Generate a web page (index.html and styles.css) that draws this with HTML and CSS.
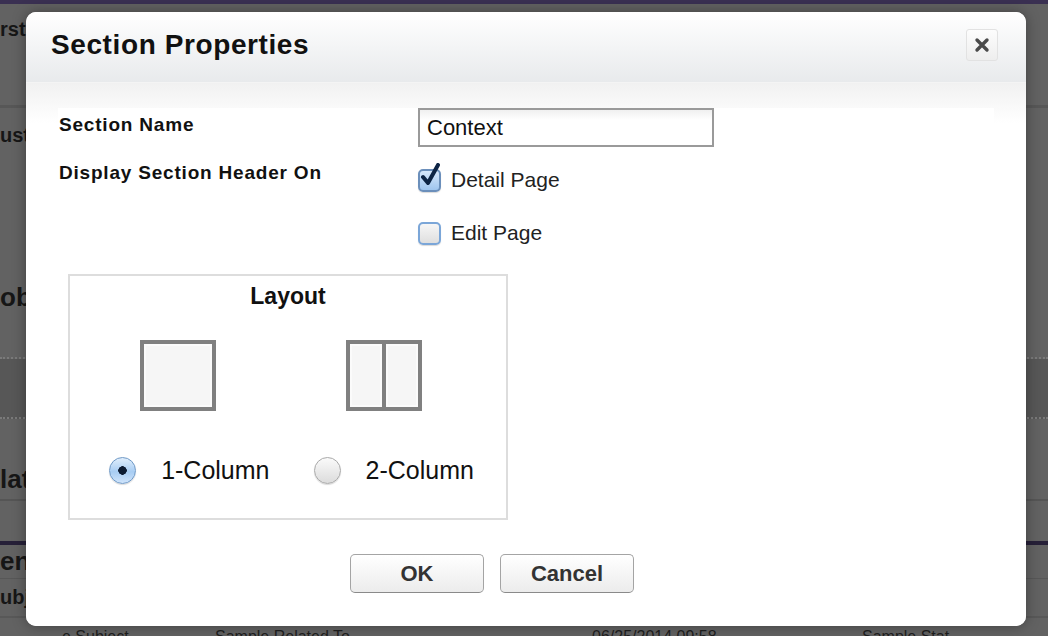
FILE: index.html
```html
<!DOCTYPE html>
<html>
<head>
<meta charset="utf-8">
<link rel="stylesheet" href="styles.css">
</head>
<body>
<div class="page">
  <div class="topbar"></div>
  <div class="bg-row r1"><span>rst</span></div>
  <div class="bg-row r2"><span>ust</span></div>
  <div class="bg-row r3"><span>obi</span></div>
  <div class="bg-row r4"></div>
  <div class="bg-row r5"><span>lat</span></div>
  <div class="bg-row r6"><span>en</span></div>
  <div class="bg-row r7"><span>ubj</span></div>
  <div class="bg-row r8">
    <span class="c1">e Subject</span>
    <span class="c2">Sample Related To</span>
    <span class="c3">06/25/2014 09:58</span>
    <span class="c4">Sample Stat</span>
  </div>
</div>

<div class="modal">
  <div class="modal-header">
    <h1 class="modal-title">Section Properties</h1>
    <button class="close-btn" aria-label="Close">
      <svg width="16" height="16" viewBox="0 0 16 16"><path d="M3 3 L13 13 M13 3 L3 13" stroke="#4a4a4a" stroke-width="3.4" stroke-linecap="round"/></svg>
    </button>
  </div>
  <div class="modal-body">
    <div class="form">
      <div class="form-row">
        <div class="label">Section Name</div>
        <div class="field"><div class="text-input">Context</div></div>
      </div>
      <div class="form-row second">
        <div class="label">Display Section Header On</div>
        <div class="field options">
          <label class="check-opt">
            <span class="checkbox checked">
              <svg class="tick" width="22" height="26" viewBox="0 0 22 26"><path d="M4 14 L9 20 L19 2" fill="none" stroke="#0d2445" stroke-width="4" stroke-linecap="round" stroke-linejoin="round"/></svg>
            </span>
            <span class="opt-text">Detail Page</span>
          </label>
          <label class="check-opt">
            <span class="checkbox"></span>
            <span class="opt-text">Edit Page</span>
          </label>
        </div>
      </div>
    </div>

    <div class="layout-box">
      <div class="layout-title">Layout</div>
      <div class="layout-icons">
        <div class="col-icon one"><div class="pane"></div></div>
        <div class="col-icon two"><div class="pane"></div><div class="pane"></div></div>
      </div>
      <div class="layout-radios">
        <label class="radio-opt"><span class="radio on"></span><span class="radio-text">1-Column</span></label>
        <label class="radio-opt"><span class="radio"></span><span class="radio-text">2-Column</span></label>
      </div>
    </div>

    <div class="buttons">
      <button class="btn">OK</button>
      <button class="btn">Cancel</button>
    </div>
  </div>
</div>
</body>
</html>
```

FILE: styles.css
```css
* { box-sizing: border-box; }
html, body { margin: 0; padding: 0; }
body {
  width: 1048px;
  height: 636px;
  overflow: hidden;
  background: #626262;
  font-family: "Liberation Sans", Arial, sans-serif;
  position: relative;
}
.page {
  display: flex;
  flex-direction: column;
  color: #161616;
  font-weight: bold;
}
.topbar { height: 4px; background: #3a3052; }
.bg-row {
  display: flex;
  align-items: center;
  white-space: nowrap;
  font-size: 26px;
}
.r1 { height: 104px; align-items: flex-start; padding-top: 14px; font-size: 20px; border-bottom: 3px solid #575757; }
.r2 { height: 60px; align-items: flex-start; padding-top: 16px; font-size: 20px; }
.r3 { height: 191px; padding-top: 70px; border-bottom: 2px dotted #7a7a7a; }
.r4 { height: 60px; background: #575757; border-bottom: 2px dotted #7a7a7a; }
.r5 { height: 82px; padding-top: 40px; border-bottom: 2px solid #555; }
.r6 { height: 38px; margin-top: 40px; border-top: 4px solid #262038; border-bottom: 1px solid #575757; }
.r7 { height: 39px; font-size: 20px; border-bottom: 2px solid #585858; }
.r8 { height: 22px; align-items: flex-start; padding-top: 10px; font-size: 16px; font-weight: normal; color: #1e1e1e; }
.r8 .c1 { width: 215px; padding-left: 62px; }
.r8 .c2 { width: 377px; }
.r8 .c3 { width: 270px; }

.modal {
  position: absolute;
  left: 26px;
  top: 12px;
  width: 1000px;
  height: 614px;
  border-radius: 10px;
  background: #fff;
  box-shadow: 0 0 14px rgba(0,0,0,0.35);
  overflow: hidden;
  display: flex;
  flex-direction: column;
}
.modal-header {
  height: 71px;
  flex: none;
  display: flex;
  align-items: center;
  justify-content: space-between;
  padding: 0 28px 0 25px;
  background: linear-gradient(#ffffff, #e8eaec);
  border-bottom: 1px solid #f4f4f4;
}
.modal-title {
  margin: 0;
  font-size: 28px;
  letter-spacing: 0.6px;
  font-weight: bold;
  color: #111;
  padding-bottom: 4px;
}
.close-btn {
  width: 32px;
  height: 32px;
  padding: 0;
  display: flex;
  align-items: center;
  justify-content: center;
  background: linear-gradient(#fdfdfd, #eeeeee);
  border: 1px solid #e2e2e2;
  border-radius: 3px;
  margin-top: -4px;
}
.modal-body {
  flex: 1;
  padding: 25px 32px 0 32px;
  background: linear-gradient(#f1f1f1 0px, #ffffff 40px);
  display: flex;
  flex-direction: column;
}
.form {
  background: #fff;
  display: flex;
  flex-direction: column;
}
.form-row {
  display: flex;
}
.label {
  width: 360px;
  flex: none;
  font-size: 19px;
  letter-spacing: 0.8px;
  line-height: 22px;
  font-weight: bold;
  color: #111;
  padding-left: 1px;
  padding-top: 6px;
}
.text-input {
  width: 296px;
  height: 39px;
  border: 2px solid #9a9a9a;
  background: linear-gradient(#f0f0f0 0px, #ffffff 10px);
  font-size: 22px;
  line-height: 25px;
  color: #111;
  padding: 5px 0 0 7px;
}
.form-row.second { margin-top: 12px; }
.form-row.second .label { padding-top: 3px; }
.options {
  display: flex;
  flex-direction: column;
  gap: 29px;
  padding-top: 9px;
}
.check-opt {
  display: flex;
  align-items: center;
  height: 24px;
}
.checkbox {
  position: relative;
  width: 23px;
  height: 23px;
  border-radius: 5px;
  border: 2px solid #7ba6d8;
  background: linear-gradient(#f6f6f6, #dfdfdf);
  box-shadow: 0 1px 1px rgba(0,0,0,0.15);
  flex: none;
}
.checkbox.checked {
  border-color: #6b8fbb;
  background: linear-gradient(#d6e7fb, #9fc5ef);
}
.tick {
  position: absolute;
  left: -1px;
  top: -8px;
}
.opt-text {
  margin-left: 10px;
  font-size: 21px;
  color: #222;
}

.layout-box {
  width: 440px;
  height: 246px;
  margin-top: 29px;
  margin-left: 10px;
  border: 2px solid #dddddd;
  display: flex;
  flex-direction: column;
  align-items: center;
}
.layout-title {
  font-size: 23px;
  line-height: 26px;
  font-weight: bold;
  color: #111;
  margin-top: 7px;
}
.layout-icons {
  display: flex;
  gap: 130px;
  margin-top: 31px;
  margin-left: -14px;
}
.col-icon {
  width: 76px;
  height: 71px;
  border: 4px solid #808080;
  background: #808080;
  display: flex;
  gap: 4px;
}
.pane {
  flex: 1;
  background: #f6f6f6;
  border: 2px solid #fbfbfb;
}
.layout-radios {
  display: flex;
  gap: 44px;
  margin-top: 45px;
  margin-left: 7px;
}
.radio-opt {
  display: flex;
  align-items: center;
}
.radio {
  width: 27px;
  height: 27px;
  border-radius: 50%;
  border: 1px solid #a9a9a9;
  background: linear-gradient(#fafafa, #dcdcdc);
  box-shadow: 0 1px 1px rgba(0,0,0,0.15);
  flex: none;
}
.radio.on {
  border-color: #6f99c6;
  background: radial-gradient(circle at 50% 50%, #0d1c33 0 4px, transparent 4.5px), linear-gradient(#e0eefc, #a8cdf3 55%, #cfe4fb);
}
.radio-text {
  margin-left: 25px;
  font-size: 25px;
  line-height: 29px;
  color: #111;
}

.buttons {
  display: flex;
  justify-content: center;
  gap: 16px;
  margin-top: 34px;
  padding-right: 68px;
}
.btn {
  width: 134px;
  height: 39px;
  border: 1px solid #a4a4a4;
  border-bottom-color: #8a8a8a;
  border-radius: 5px;
  background: linear-gradient(#ffffff, #ececec);
  font-family: "Liberation Sans", Arial, sans-serif;
  font-size: 22px;
  font-weight: bold;
  color: #333;
  padding: 0;
}
```
